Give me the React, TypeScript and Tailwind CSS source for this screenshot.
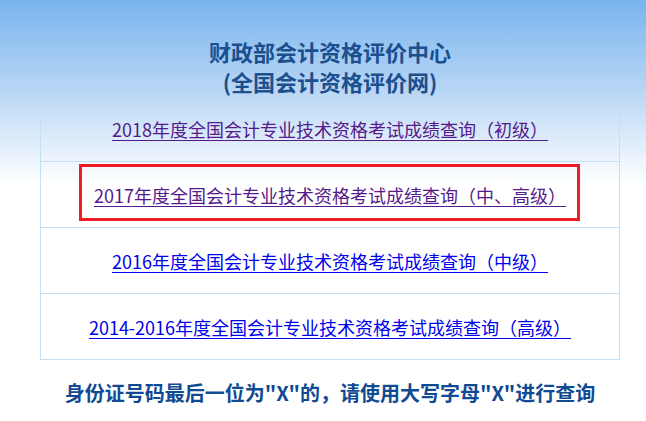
const links = [
  { text: '2018年度全国会计专业技术资格考试成绩查询（初级）', visited: true, marked: false },
  { text: '2017年度全国会计专业技术资格考试成绩查询（中、高级）', visited: true, marked: true },
  { text: '2016年度全国会计专业技术资格考试成绩查询（中级）', visited: false, marked: false },
  { text: '2014-2016年度全国会计专业技术资格考试成绩查询（高级）', visited: false, marked: false },
];

export default function App() {
  return (
    <div
      className="min-h-[421px] w-full bg-[linear-gradient(to_bottom,#78b4ee_0px,#b8d6f5_90px,#ffffff_185px)] bg-no-repeat"
      style={{ fontFamily: '"Noto Sans CJK SC", "Noto Sans", sans-serif' }}
    >
      <div className="ml-[40px] w-[580px] pt-[36px]">
        {/* 标题 */}
        <h1 className="text-center text-[22px] font-bold leading-[30px] text-[#1c4f8e]">
          财政部会计资格评价中心
          <br />
          (全国会计资格评价网)
        </h1>

        {/* 查询列表 */}
        <div className="border-x border-[#c2e0f1]">
          {links.map((link) => (
            <div
              key={link.text}
              className="relative flex h-[66px] items-center justify-center border-b border-[#c2e0f1]"
            >
              <a
                href="#"
                className={`text-[18px] leading-none underline underline-offset-[3px] ${
                  link.visited ? 'text-[#551a8b]' : 'text-[#0000ee]'
                }`}
              >
                {link.text}
              </a>
              {link.marked && (
                <div className="pointer-events-none absolute left-[38px] top-[2px] h-[57px] w-[501px] border-[3px] border-[#ee1c25]" />
              )}
            </div>
          ))}
        </div>

        {/* 提示 */}
        <p className="mt-[18px] text-center text-[20px] font-bold leading-[30px] text-[#0f4a92]">
          身份证号码最后一位为"X"的，请使用大写字母"X"进行查询
        </p>
      </div>
    </div>
  );
}
